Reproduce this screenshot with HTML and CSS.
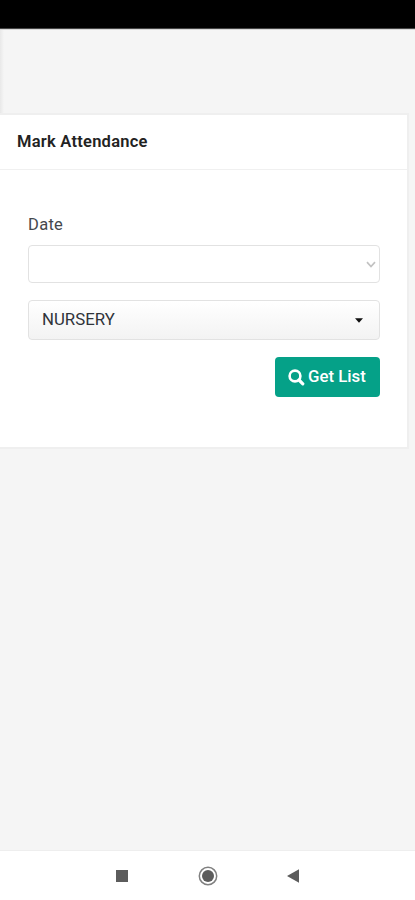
FILE: index.html
```html
<!DOCTYPE html>
<html lang="en">
<head>
<meta charset="utf-8">
<title>Mark Attendance</title>
<link rel="stylesheet" href="styles.css">
</head>
<body>
<div class="status"></div>
<main class="content">
  <div class="topbar"></div>
  <section class="card">
    <h1 class="card-title">Mark Attendance</h1>
    <form class="form">
      <label class="label">Date</label>
      <div class="date">
        <svg width="10" height="8" viewBox="0 0 10 8"><path d="M1 2.2 5 6.5 9 2.2" fill="none" stroke="#c2c2c2" stroke-width="1.7"/></svg>
      </div>
      <div class="select">
        <span>NURSERY</span>
        <svg width="8" height="5" viewBox="0 0 8 5"><path d="M0 .3H8L4 4.8Z" fill="#111"/></svg>
      </div>
      <button class="button" type="button">
        <svg width="17" height="17" viewBox="0 0 17 17" fill="none" stroke="#fff"><circle cx="7" cy="7" r="5.4" stroke-width="2.6"/><path d="M11 11 14.8 14.8" stroke-width="3.2" stroke-linecap="round"/></svg>
        <span>Get List</span>
      </button>
    </form>
  </section>
</main>
<nav class="nav">
  <svg width="12" height="12" viewBox="0 0 12 12"><rect width="12" height="12" fill="#5c5c5c"/></svg>
  <svg width="20" height="20" viewBox="0 0 20 20"><circle cx="10" cy="10" r="8.7" fill="none" stroke="#808080" stroke-width="1.5"/><circle cx="10" cy="10" r="6" fill="#5c5c5c"/></svg>
  <svg class="back" width="12" height="14" viewBox="0 0 12 14"><path d="M12 .3V13.7L0 7Z" fill="#5c5c5c"/></svg>
</nav>
</body>
</html>
```
FILE: styles.css
```css
* { box-sizing: border-box; }
body {
  margin: 0;
  height: 900px;
  display: flex;
  flex-direction: column;
  overflow: hidden;
  background: #f5f5f5;
  color: #45484d;
  font-family: Roboto, sans-serif;
  font-size: 16px;
}
svg { display: block; flex: none; }
.status { height: 29px; background: #000; border-bottom: 1px solid #444; }
.content { flex: 1; }
.topbar {
  height: 84px;
  border-top: 1px solid #d8d8d8;
  background: linear-gradient(90deg, #e8e8e8, #f5f5f5 4px);
}
.card {
  width: 409px;
  height: 336px;
  background: #fff;
  border: solid #efefef;
  border-width: 2px 2px 2px 0;
}
.card-title {
  margin: 0;
  height: 55px;
  padding-left: 17px;
  border-bottom: 1px solid #f0f0f0;
  color: #222;
  font-size: 16.5px;
  font-weight: 600;
  line-height: 53px;
  letter-spacing: .25px;
}
.form {
  display: flex;
  flex-direction: column;
  padding: 45px 27px 0 28px;
}
.label { height: 30px; line-height: 19px; font-size: 16.5px; letter-spacing: .3px; }
.date, .select {
  display: flex;
  align-items: center;
  border: 1px solid #e2e2e2;
  border-radius: 4px;
}
.date { height: 38px; justify-content: flex-end; padding-right: 3px; }
.select {
  height: 40px;
  margin-top: 17px;
  padding: 0 16px 0 13px;
  justify-content: space-between;
  background: linear-gradient(#fff, #f3f3f3);
  color: #30343a;
  font-size: 16.8px;
}
.select span, .button span { padding-bottom: 2px; }
.button {
  align-self: flex-end;
  display: flex;
  align-items: center;
  width: 105px;
  height: 40px;
  margin-top: 17px;
  padding: 0 0 0 13px;
  gap: 3px;
  border: 0;
  border-radius: 4px;
  background: #05a188;
  color: #fff;
  font: 500 16.8px Roboto, sans-serif;
}
.nav {
  height: 50px;
  display: flex;
  justify-content: center;
  align-items: center;
  gap: 70px;
  border-top: 1px solid #eee;
  background: #fff;
}
.back { margin-left: -1px; }
```
